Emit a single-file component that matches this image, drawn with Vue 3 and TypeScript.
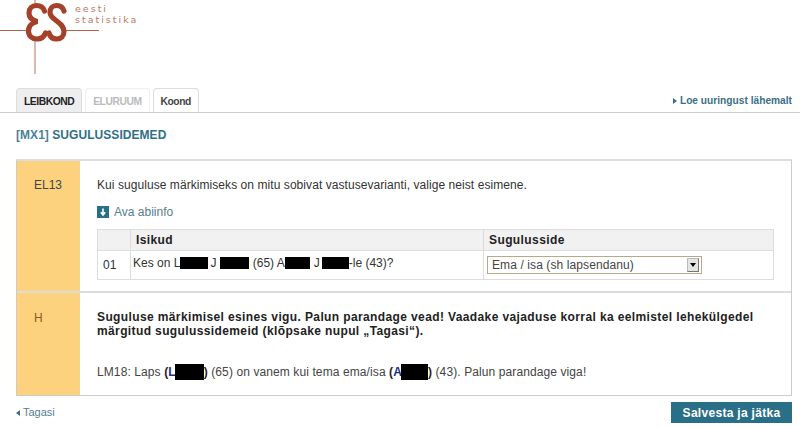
<script setup lang="ts">
const tabs = [
  { label: 'LEIBKOND', state: 'active' },
  { label: 'ELURUUM', state: 'disabled' },
  { label: 'Koond', state: '' },
]
</script>

<template>
  <div class="page">
    <header class="top">
      <svg class="logo" width="100" height="76" viewBox="0 0 100 76">
        <path d="M0 30.500H27M65 30.500H99" stroke="#b5604a" stroke-width="1" fill="none" />
        <path d="M35 0V4M35 40V74" stroke="#c9a090" stroke-width="1.4" fill="none" />
        <path d="M44.500 11C43 6.500 39.500 5.500 36.500 5.500C32 5.500 29 8.500 29 13C29 17.500 32.500 20.500 37.500 21.500C32 22.500 28.500 26 28.500 31C28.500 36 32 39 37 39C41 39 44 37 45.500 33" stroke="#a5402a" stroke-width="5.200" fill="none" stroke-linecap="round" />
        <path d="M64 11C63 7.500 60 5.500 56.500 5.500C52.500 5.500 50 8.500 50 12.500C50 20 64 22 64 31.500C64 36 61 39 57 39C53 39 50 37 49 33" stroke="#a5402a" stroke-width="5.200" fill="none" stroke-linecap="round" />
      </svg>
      <div class="logo-text">eesti<br />statistika</div>
    </header>

    <nav class="tabbar">
      <div class="tabs">
        <span v-for="t in tabs" :key="t.label" class="tab" :class="t.state">{{ t.label }}</span>
      </div>
      <a class="more"><i class="tri-right"></i>Loe uuringust lähemalt</a>
    </nav>

    <h1 class="title"><span class="code">[MX1]</span> SUGULUSSIDEMED</h1>

    <section class="box">
      <div class="row first">
        <div class="side">EL13</div>
        <div class="body">
          <p class="intro">Kui suguluse märkimiseks on mitu sobivat vastusevarianti, valige neist esimene.</p>
          <a class="help">
            <svg width="12" height="12" viewBox="0 0 12 12">
              <rect width="12" height="12" fill="#2a6f88" />
              <path d="M6 2.500V8M3.800 6.200L6 9L8.200 6.200" stroke="#fff" stroke-width="1.600" fill="none" />
            </svg>
            Ava abiinfo
          </a>
          <table class="grid">
            <colgroup>
              <col style="width: 33px" />
              <col style="width: 353px" />
              <col />
            </colgroup>
            <thead>
              <tr>
                <th></th>
                <th>Isikud</th>
                <th>Sugulusside</th>
              </tr>
            </thead>
            <tbody>
              <tr>
                <td class="num">01</td>
                <td class="who">Kes on L<span class="ink a"></span>J<span class="ink b"></span> (65) A<span class="ink c"></span>J<span class="ink d"></span>-le (43)?</td>
                <td>
                  <div class="select">
                    <span>Ema / isa (sh lapsendanu)</span>
                    <span class="arrow"></span>
                  </div>
                </td>
              </tr>
            </tbody>
          </table>
        </div>
      </div>
      <div class="row second">
        <div class="side err">H</div>
        <div class="body">
          <p class="error">Suguluse märkimisel esines vigu. Palun parandage vead! Vaadake vajaduse korral ka eelmistel lehekülgedel märgitud sugulussidemeid (klõpsake nupul „Tagasi“).</p>
          <p class="lm">LM18: Laps <b>(<em>L</em><span class="ink big"></span>)</b> (65) on vanem kui tema ema/isa <b>(<em>A</em><span class="ink big2"></span>)</b> (43). Palun parandage viga!</p>
        </div>
      </div>
    </section>

    <footer class="foot">
      <a class="back"><i class="tri-left"></i>Tagasi</a>
      <button class="save">Salvesta ja jätka</button>
    </footer>
  </div>
</template>

<style>
body {
  background: #fff;
}
</style>

<style scoped>
.page {
  width: 800px;
  height: 428px;
  overflow: hidden;
  font-family: "Liberation Sans", Arial, sans-serif;
  font-size: 12px;
  color: #333;
}

.top {
  height: 88px;
  display: flex;
  align-items: flex-start;
}

.logo {
  flex: none;
  margin-right: -25px;
}

.logo-text {
  font-family: "DejaVu Sans", sans-serif;
  font-size: 9.5px;
  line-height: 11px;
  letter-spacing: 2px;
  color: #bd7a66;
  margin-top: 3px;
}

.tabbar {
  height: 24px;
  border-bottom: 1px solid #ccc;
  display: flex;
  justify-content: space-between;
  padding: 0 8px 0 16px;
}

.tabs {
  display: flex;
  gap: 3px;
}

.tab {
  height: 24px;
  box-sizing: border-box;
  border: 1px solid #ddd;
  border-bottom: none;
  border-radius: 4px 4px 0 0;
  padding: 0 7px;
  line-height: 25px;
  font-size: 10.3px;
  letter-spacing: -0.45px;
  font-weight: bold;
  color: #444;
}

.tab.active {
  background: #eee;
  color: #222;
}

.tab.disabled {
  color: #bbb;
  border-color: #eee;
}

.more {
  font-size: 10.2px;
  font-weight: bold;
  color: #3c6f85;
  line-height: 26px;
}

.tri-right {
  display: inline-block;
  border-left: 4px solid #3c6f85;
  border-top: 3px solid transparent;
  border-bottom: 3px solid transparent;
  margin-right: 3px;
}

.title {
  margin: 16px 0 17px 16px;
  font-size: 12px;
  line-height: 13px;
  letter-spacing: 0.05px;
  color: #2f6f88;
}

.code {
  color: #4a8298;
}

.box {
  margin: 0 8px 0 16px;
  border: 1px solid #ccc;
  border-top: 2px solid #ddd;
}

.row {
  display: flex;
}

.first {
  height: 130px;
  border-bottom: 2px solid #ddd;
}

.second {
  height: 102px;
}

.side {
  width: 63px;
  flex: none;
  box-sizing: border-box;
  background: #fdd27f;
  padding: 17px 0 0 17px;
  color: #444;
}

.side.err {
  color: #8a5a20;
  padding-top: 18px;
}

.body {
  flex: 1;
  padding: 0 17px;
  min-width: 0;
}

.intro {
  margin: 17px 0 0;
  line-height: 14px;
  letter-spacing: 0.063px;
}

.help {
  display: flex;
  align-items: center;
  gap: 5px;
  margin-top: 13px;
  height: 14px;
  color: #55808f;
}

.grid {
  margin-top: 10px;
  width: 677px;
  border-collapse: collapse;
  table-layout: fixed;
}

.grid th,
.grid td {
  border: 1px solid #ddd;
  padding: 0;
}

.grid th {
  background: #f1f1f1;
  height: 20px;
  text-align: left;
  padding-left: 5px;
  letter-spacing: 0.4px;
  color: #222;
}

.grid td {
  height: 23px;
}

.grid td.num {
  padding-left: 5px;
}

.grid td.who {
  padding: 0 0 5px 2px;
  white-space: nowrap;
}

.ink {
  display: inline-block;
  background: #000;
  height: 12px;
  vertical-align: -2px;
}

.a { width: 28px; margin-right: 2px; }
.b { width: 29px; margin-left: 4px; }
.c { width: 25px; margin-right: 4px; }
.d { width: 27px; margin-left: 2px; }

.select {
  margin-left: 3px;
  width: 215px;
  height: 18px;
  box-sizing: border-box;
  border: 1px solid #b5ab8c;
  padding: 0 2px 0 4px;
  display: flex;
  align-items: center;
  justify-content: space-between;
  color: #444;
  letter-spacing: 0.1px;
}

.arrow {
  width: 12px;
  height: 14px;
  background: #e4e4e4;
  border: 1px solid #bbb;
  border-right-color: #777;
  border-bottom-color: #777;
  box-sizing: border-box;
  position: relative;
}

.arrow::after {
  content: "";
  position: absolute;
  left: 2px;
  top: 4px;
  border-top: 4px solid #000;
  border-left: 3px solid transparent;
  border-right: 3px solid transparent;
}

.error {
  margin: 17px 0 0;
  font-weight: bold;
  line-height: 14px;
  letter-spacing: 0.38px;
  color: #222;
}

.lm {
  margin: 26px 0 0;
  line-height: 16px;
  color: #444;
  letter-spacing: 0.1px;
}

.lm b {
  color: #222;
}

.lm em {
  font-style: normal;
  color: #1c2f8c;
}

.big { width: 29px; height: 16px; vertical-align: -4px; margin-left: -1px; }
.big2 { width: 27px; height: 16px; vertical-align: -4px; margin-left: -1px; }

.foot {
  margin: 6px 8px 0 16px;
  display: flex;
  justify-content: space-between;
  align-items: flex-start;
}

.back {
  margin-top: 4px;
  font-size: 11px;
  color: #55808f;
}

.tri-left {
  display: inline-block;
  border-right: 4px solid #3c6f85;
  border-top: 3px solid transparent;
  border-bottom: 3px solid transparent;
  margin-right: 3px;
}

.save {
  width: 121px;
  height: 21px;
  border: none;
  background: #2a6f88;
  color: #fff;
  font-family: inherit;
  font-size: 12px;
  font-weight: bold;
  letter-spacing: 0.3px;
  padding: 0;
}
</style>
